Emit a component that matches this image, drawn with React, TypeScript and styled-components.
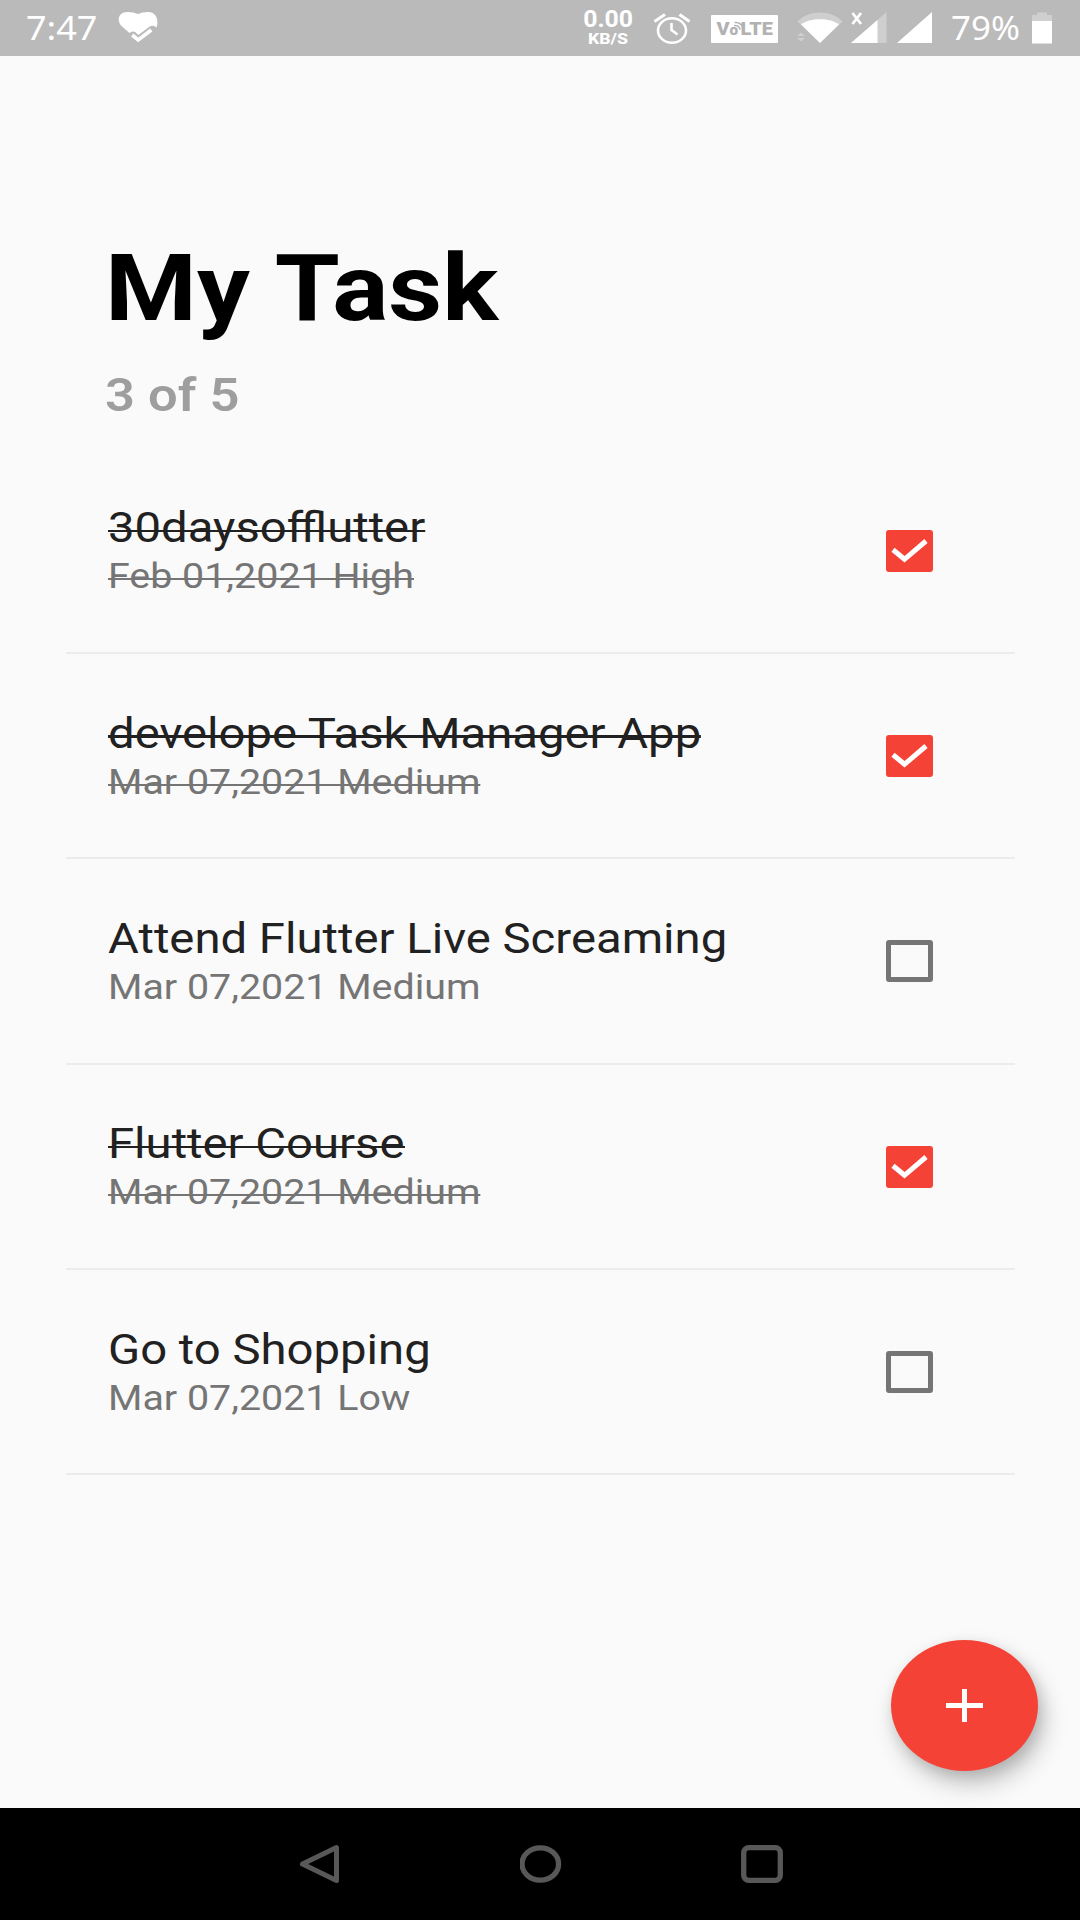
import React from "react";
import styled, { createGlobalStyle, css } from "styled-components";

const GlobalStyle = createGlobalStyle`
  *, *::before, *::after { box-sizing: border-box; }
  html, body { margin: 0; padding: 0; background: #fafafa; }
`;

const Screen = styled.div`
  width: 1080px;
  height: 1920px;
  display: flex;
  flex-direction: column;
  overflow: hidden;
  background: #fafafa;
  font-family: Roboto, "Liberation Sans", sans-serif;
`;

const StatusBar = styled.header`
  flex: none;
  height: 56px;
  display: flex;
  align-items: flex-start;
  background: #bababa;
  color: #fff;
`;

const StatusItem = styled.div<{ $gap: number; $width: number }>`
  flex: none;
  width: ${(p) => p.$width}px;
  height: 56px;
  margin-left: ${(p) => p.$gap}px;
  svg { display: block; }
`;

const WideText = styled.span<{ $stretch?: number }>`
  display: block;
  width: max-content;
  white-space: pre;
  transform: scaleX(${(p) => p.$stretch ?? 1.125});
  transform-origin: left center;
`;

const StatusText = styled(WideText)`
  font-family: "Noto Sans", sans-serif;
  font-size: 32px;
  line-height: 56px;
`;

const Speed = styled(StatusItem)`
  display: flex;
  flex-direction: column;
  align-items: center;
  padding-top: 8px;
  font-weight: 700;
`;

const SpeedValue = styled.span`
  font-size: 23px;
  line-height: 24px;
  transform: scaleX(1.08);
`;

const SpeedUnit = styled.span`
  font-size: 15px;
  font-weight: 800;
  line-height: 14px;
  transform: scaleX(1.18);
`;

const VolteBadge = styled.div`
  width: 67px;
  height: 28px;
  margin-top: 15px;
  display: flex;
  align-items: center;
  justify-content: center;
  background: #fff;
  border-radius: 1px;
  color: #b2b2b2;
  font-size: 18px;
  font-weight: 900;
`;

const VolteText = styled.span`
  display: flex;
  align-items: baseline;
  line-height: 28px;
  padding-top: 1px;
  transform: scaleX(1.1);
`;

const SmallO = styled.span`
  font-size: 14px;
  position: relative;
  margin-right: 2px;
  svg { position: absolute; left: 3px; top: 5px; }
`;

const Page = styled.main`
  flex: 1;
  min-height: 0;
  display: flex;
  flex-direction: column;
  padding: 177px 65px 0 66px;
  position: relative;
`;

const Heading = styled.h1`
  margin: 0 0 0 39px;
  height: 134px;
  font-size: 93.33px;
  font-weight: 700;
  line-height: 110px;
  word-spacing: 1.5px;
  color: #000;
`;

const Counter = styled.p`
  margin: 0 0 0 39px;
  height: 81.6px;
  font-size: 46.67px;
  font-weight: 600;
  line-height: 56px;
  color: #9e9e9e;
`;

const List = styled.ul`
  margin: 0;
  padding: 0;
  list-style: none;
`;

const Row = styled.li`
  height: 205.33px;
  display: flex;
  justify-content: space-between;
  align-items: flex-start;
  padding: 54.700px 82px 0 42px;
  border-bottom: 2px solid #ececec;
`;

const RowText = styled.div`
  display: flex;
  flex-direction: column;
  gap: 3px;
`;

const strike = (top: number, height: number) => css`
  &::after {
    content: "";
    position: absolute;
    left: 0;
    right: 0;
    top: ${top}px;
    height: ${height}px;
    background: currentColor;
  }
`;

const TaskName = styled(WideText)<{ $done: boolean }>`
  position: relative;
  font-size: 42px;
  line-height: 50px;
  color: #212121;
  ${(p) => p.$done && strike(26.4, 2.5)}
`;

const TaskMeta = styled(WideText)<{ $done: boolean }>`
  position: relative;
  font-size: 35px;
  line-height: 41px;
  color: #757575;
  ${(p) => p.$done && strike(22, 2)}
`;

const CheckBox = styled.span<{ $checked: boolean }>`
  flex: none;
  width: 47px;
  height: 42px;
  margin-top: 26.500px;
  border-style: solid;
  border-width: 5px;
  border-color: ${(p) => (p.$checked ? "#f44336" : "#757575")};
  background: ${(p) => (p.$checked ? "#f44336" : "transparent")};
  border-radius: 3px;
  svg { display: block; margin: -5px; }
`;

const AddButton = styled.button`
  position: absolute;
  left: 891px;
  top: 1584px;
  width: 147px;
  height: 131px;
  padding: 0;
  border: 0;
  border-radius: 50%;
  display: flex;
  align-items: center;
  justify-content: center;
  background: #f44336;
  box-shadow: 6px 13px 24px rgba(0, 0, 0, 0.22), 3px 5px 14px rgba(0, 0, 0, 0.12);
`;

const NavBar = styled.nav`
  flex: none;
  height: 112px;
  display: flex;
  justify-content: space-between;
  align-items: center;
  padding: 0 297px 0 299px;
  background: #000;
  svg { display: block; }
`;

type Task = { name: string; meta: string; done: boolean };

const tasks: Task[] = [
  { name: "30daysofflutter", meta: "Feb 01,2021 High", done: true },
  { name: "develope Task Manager App", meta: "Mar 07,2021 Medium", done: true },
  { name: "Attend Flutter Live Screaming", meta: "Mar 07,2021 Medium", done: false },
  { name: "Flutter Course", meta: "Mar 07,2021 Medium", done: true },
  { name: "Go to Shopping", meta: "Mar 07,2021 Low", done: false },
];

const HeartIcon = () => (
  <svg width="42" height="56" viewBox="0 0 42 56">
    <path
      d="M11.500 33 L3.500 26 C-2 20 1 12 9.500 12 C14 12 17 12.800 20 14 C23 12.800 26 12 30 12 C38.500 12 41 20 38.500 27.500 C36 25 33 25.500 30.500 27.500 L20.300 35 L17.500 32.300 C15.500 30.800 13.500 31.300 11.500 33 Z"
      fill="#fff"
    />
    <path d="M14.200 35 L20.200 40 L33.300 30" fill="none" stroke="#fff" strokeWidth="3.600" />
  </svg>
);

const AlarmIcon = () => (
  <svg width="38" height="56" viewBox="0 0 38 56" fill="none" stroke="#fff">
    <ellipse cx="19" cy="30.500" rx="14" ry="12.200" strokeWidth="2.600" />
    <path d="M18.500 23 V30 L24.500 34.500" strokeWidth="2.600" />
    <path d="M1.500 21.500 L12 14.500 M26.500 14.500 L36.500 21.500" strokeWidth="3" />
  </svg>
);

const WifiIcon = () => (
  <svg width="48" height="56" viewBox="0 0 48 56">
    <path d="M1.500 21.500 C13 9.500 35 9.500 46.500 21.500 L24 43 Z" fill="#cfcfcf" />
    <path d="M1.500 21.500 L5 25 L24 43 L0 43 Z" fill="#bababa" />
    <path d="M5 24.500 C14 17.500 34 17.500 43 24.500 L24 43 Z" fill="#fff" />
    <path d="M1 36 L5 32.500 L9 36 Z M1 38 H9 L5 41.500 Z" fill="#cfcfcf" />
  </svg>
);

const SignalOneIcon = () => (
  <svg width="36" height="56" viewBox="0 0 36 56">
    <path d="M35.500 12 V43 H0 Z" fill="#cfcfcf" />
    <path d="M26.500 20 V43 H0 Z" fill="#fff" />
    <path d="M1.500 13 L10 24 M10 13 L1.500 24" stroke="#fff" strokeWidth="2.800" fill="none" />
  </svg>
);

const SignalTwoIcon = () => (
  <svg width="36" height="56" viewBox="0 0 36 56">
    <path d="M35 12 V43 H0 Z" fill="#fff" />
  </svg>
);

const BatteryIcon = () => (
  <svg width="20" height="56" viewBox="0 0 20 56">
    <path d="M0 15 H5 V12.500 H15 V15 H20 V22 H0 Z" fill="#cfcfcf" />
    <rect y="21" width="20" height="22.500" fill="#fff" />
  </svg>
);

const CheckMark = () => (
  <svg width="47" height="42" viewBox="0 0 47 42" fill="none">
    <path d="M7 19.800 L18.500 29.300 L40 11" stroke="#fff" strokeWidth="5" />
  </svg>
);

export default function App() {
  const done = tasks.filter((t) => t.done).length;
  return (
    <>
      <GlobalStyle />
      <Screen>
        <StatusBar>
          <StatusItem $gap={26} $width={72}>
            <StatusText>7:47</StatusText>
          </StatusItem>
          <StatusItem $gap={20} $width={42}><HeartIcon /></StatusItem>
          <Speed $gap={418} $width={60}>
            <SpeedValue>0.00</SpeedValue>
            <SpeedUnit>KB/S</SpeedUnit>
          </Speed>
          <StatusItem $gap={15} $width={38}><AlarmIcon /></StatusItem>
          <StatusItem $gap={20} $width={67}>
            <VolteBadge>
              <VolteText>
                V
                <SmallO>
                  o
                  <svg width="12" height="10" viewBox="0 0 12 10" fill="none" stroke="#b2b2b2" strokeWidth="1.500">
                    <path d="M1 4.500 C4 4 6 6 6.500 8.500 M1.500 1.500 C6 1 9 4 9.500 8" />
                  </svg>
                </SmallO>
                LTE
              </VolteText>
            </VolteBadge>
          </StatusItem>
          <StatusItem $gap={18} $width={48}><WifiIcon /></StatusItem>
          <StatusItem $gap={7} $width={36}><SignalOneIcon /></StatusItem>
          <StatusItem $gap={10} $width={36}><SignalTwoIcon /></StatusItem>
          <StatusItem $gap={18} $width={70}>
            <StatusText $stretch={1.09}>79%</StatusText>
          </StatusItem>
          <StatusItem $gap={11} $width={20}><BatteryIcon /></StatusItem>
        </StatusBar>
        <Page>
          <Heading><WideText>My Task</WideText></Heading>
          <Counter><WideText>{`${done} of ${tasks.length}`}</WideText></Counter>
          <List>
            {tasks.map((t) => (
              <Row key={t.name}>
                <RowText>
                  <TaskName $done={t.done}>{t.name}</TaskName>
                  <TaskMeta $done={t.done}>{t.meta}</TaskMeta>
                </RowText>
                <CheckBox $checked={t.done} role="checkbox" aria-checked={t.done}>
                  {t.done && <CheckMark />}
                </CheckBox>
              </Row>
            ))}
          </List>
          <AddButton aria-label="Add task">
            <svg width="38" height="34" viewBox="0 0 38 34">
              <path d="M0 16.500 H37 M18.500 0 V33" stroke="#fff" strokeWidth="5" />
            </svg>
          </AddButton>
        </Page>
        <NavBar>
          <svg width="41" height="40" viewBox="0 0 41 40" fill="none" stroke="#585858" strokeWidth="5" strokeLinejoin="round">
            <path d="M37.500 3.500 V36.500 L3.500 20 Z" />
          </svg>
          <svg width="42" height="40" viewBox="0 0 42 40" fill="none" stroke="#585858" strokeWidth="5.300">
            <ellipse cx="20.300" cy="20" rx="18.300" ry="16.200" />
          </svg>
          <svg width="42" height="40" viewBox="0 0 42 40" fill="none" stroke="#585858" strokeWidth="5.300">
            <rect x="2.700" y="3.700" width="36.600" height="32.600" rx="5" />
          </svg>
        </NavBar>
      </Screen>
    </>
  );
}
